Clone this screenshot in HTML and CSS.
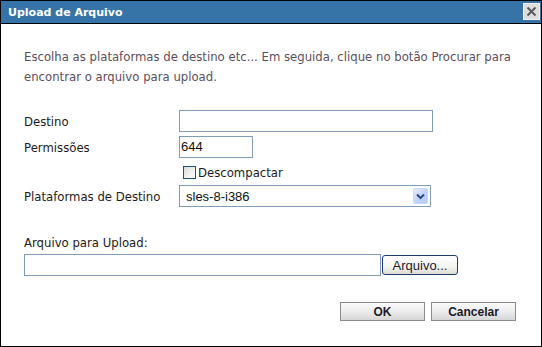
FILE: index.html
```html
<!DOCTYPE html>
<html lang="pt">
<head>
<meta charset="utf-8">
<title>Upload de Arquivo</title>
<link rel="stylesheet" href="styles.css">
</head>
<body>
<div class="dialog">
  <div class="titlebar">
    <span class="title">Upload de Arquivo</span>
    <span class="close" aria-label="Fechar">
      <svg width="11" height="11" viewBox="0 0 11 11"><path d="M1.5 1.5 L9.5 9.5 M9.5 1.5 L1.5 9.5" stroke="#5a5a5a" stroke-width="2" fill="none"/></svg>
    </span>
  </div>
  <div class="content">
    <p class="intro">Escolha as plataformas de destino etc... Em seguida, clique no botão Procurar para encontrar o arquivo para upload.</p>
    <div class="form">
      <label class="lbl">Destino</label>
      <div class="field"><span class="input input-wide"></span></div>
      <label class="lbl">Permissões</label>
      <div class="field"><span class="input input-short">644</span></div>
      <span></span>
      <div class="field"><span class="check"></span><span class="check-lbl">Descompactar</span></div>
      <label class="lbl">Plataformas de Destino</label>
      <div class="field">
        <span class="select"><span class="select-val">sles-8-i386</span>
          <span class="drop"><svg width="9" height="7" viewBox="0 0 9 7"><path d="M1 1.5 L4.5 5 L8 1.5" stroke="#2d4a7e" stroke-width="2" fill="none"/></svg></span>
        </span>
      </div>
    </div>
    <div class="upload">
      <div class="upload-lbl">Arquivo para Upload:</div>
      <div class="upload-row">
        <span class="input input-file"></span>
        <span class="browse">Arquivo...</span>
      </div>
    </div>
    <div class="actions">
      <span class="btn">OK</span>
      <span class="btn">Cancelar</span>
    </div>
  </div>
</div>
</body>
</html>
```
FILE: styles.css
```css
html, body {
  margin: 0;
  padding: 0;
  background: #ffffff;
}
.dialog {
  width: 542px;
  height: 347px;
  box-sizing: border-box;
  border: 1px solid #000;
  background: #fff;
  display: flex;
  flex-direction: column;
}
.titlebar {
  height: 22px;
  background: #3674a8;
  border-bottom: 1px solid #000;
  display: flex;
  align-items: center;
  justify-content: space-between;
  padding: 0 1px 0 7px;
}
.title {
  font-family: "DejaVu Sans", sans-serif;
  font-weight: bold;
  font-size: 11px;
  color: #fff;
}
.close {
  width: 15px;
  height: 15px;
  margin-top: -1px;
  background: #dedede;
  border: 1px solid #f2f2f2;
  display: flex;
  align-items: center;
  justify-content: center;
}
.content {
  padding: 0 25px 0 23px;
  font-family: "DejaVu Sans", sans-serif;
  font-size: 11.7px;
}
.intro {
  margin: 23px 0 23px 0;
  line-height: 20px;
  color: #5c4f60;
  width: 500px;
}
.form {
  display: grid;
  grid-template-columns: 155px 1fr;
  grid-template-rows: 26px 25px 24px 22px;
}
.lbl {
  color: #1e1a20;
  height: 22px;
  line-height: 24px;
}
.field {
  display: flex;
  align-items: flex-start;
}
.input {
  box-sizing: border-box;
  height: 22px;
  border: 1px solid #7f9db9;
  background: #fff;
  font-family: "Liberation Sans", Arial, sans-serif;
  font-size: 13px;
  line-height: 20px;
  color: #111;
  padding: 0 2px;
}
.input-wide { width: 254px; }
.input-short { width: 74px; padding-left: 1px; }
.check {
  box-sizing: border-box;
  width: 13px;
  height: 13px;
  margin: 5px 2px 0 4px;
  border: 1px solid #1c5180;
  background: linear-gradient(135deg, #dcdcd6 0%, #f6f6f4 70%, #fff 100%);
}
.check-lbl {
  color: #1e1a20;
  line-height: 24px;
}
.select {
  box-sizing: border-box;
  width: 252px;
  height: 22px;
  border: 1px solid #7f9db9;
  display: flex;
  align-items: center;
  justify-content: space-between;
  padding: 0 2px 0 6px;
  font-family: "Liberation Sans", Arial, sans-serif;
  font-size: 13px;
  color: #111;
}
.drop {
  box-sizing: border-box;
  width: 15px;
  height: 16px;
  border-radius: 2px;
  background: linear-gradient(135deg, #e6eefc 0%, #c3d5fa 50%, #b4c9f4 100%);
  border: 1px solid #c9d8f7;
  display: flex;
  align-items: center;
  justify-content: center;
}
.upload {
  margin-top: 25px;
}
.upload-lbl {
  color: #1e1a20;
  line-height: 22px;
}
.upload-row {
  display: flex;
  align-items: flex-start;
  margin-top: 0;
}
.input-file {
  width: 357px;
}
.browse {
  box-sizing: border-box;
  width: 76px;
  height: 20px;
  margin: 1px 0 0 1px;
  border: 1px solid #1d3c6e;
  border-radius: 3px;
  background: linear-gradient(#ffffff 0%, #f4f4f0 60%, #dcdcd4 100%);
  font-family: "Liberation Sans", Arial, sans-serif;
  font-size: 13px;
  color: #1a1a2e;
  display: flex;
  align-items: center;
  justify-content: center;
}
.actions {
  display: flex;
  justify-content: flex-end;
  gap: 6px;
  margin-top: 26px;
}
.btn {
  box-sizing: border-box;
  width: 85px;
  height: 19px;
  border: 1px solid #8c8c8c;
  background: linear-gradient(#fafafa 0%, #ececec 50%, #d6d6d6 100%);
  font-family: "Liberation Sans", Arial, sans-serif;
  font-weight: bold;
  font-size: 12px;
  color: #1b1b2b;
  display: flex;
  align-items: center;
  justify-content: center;
}
```
